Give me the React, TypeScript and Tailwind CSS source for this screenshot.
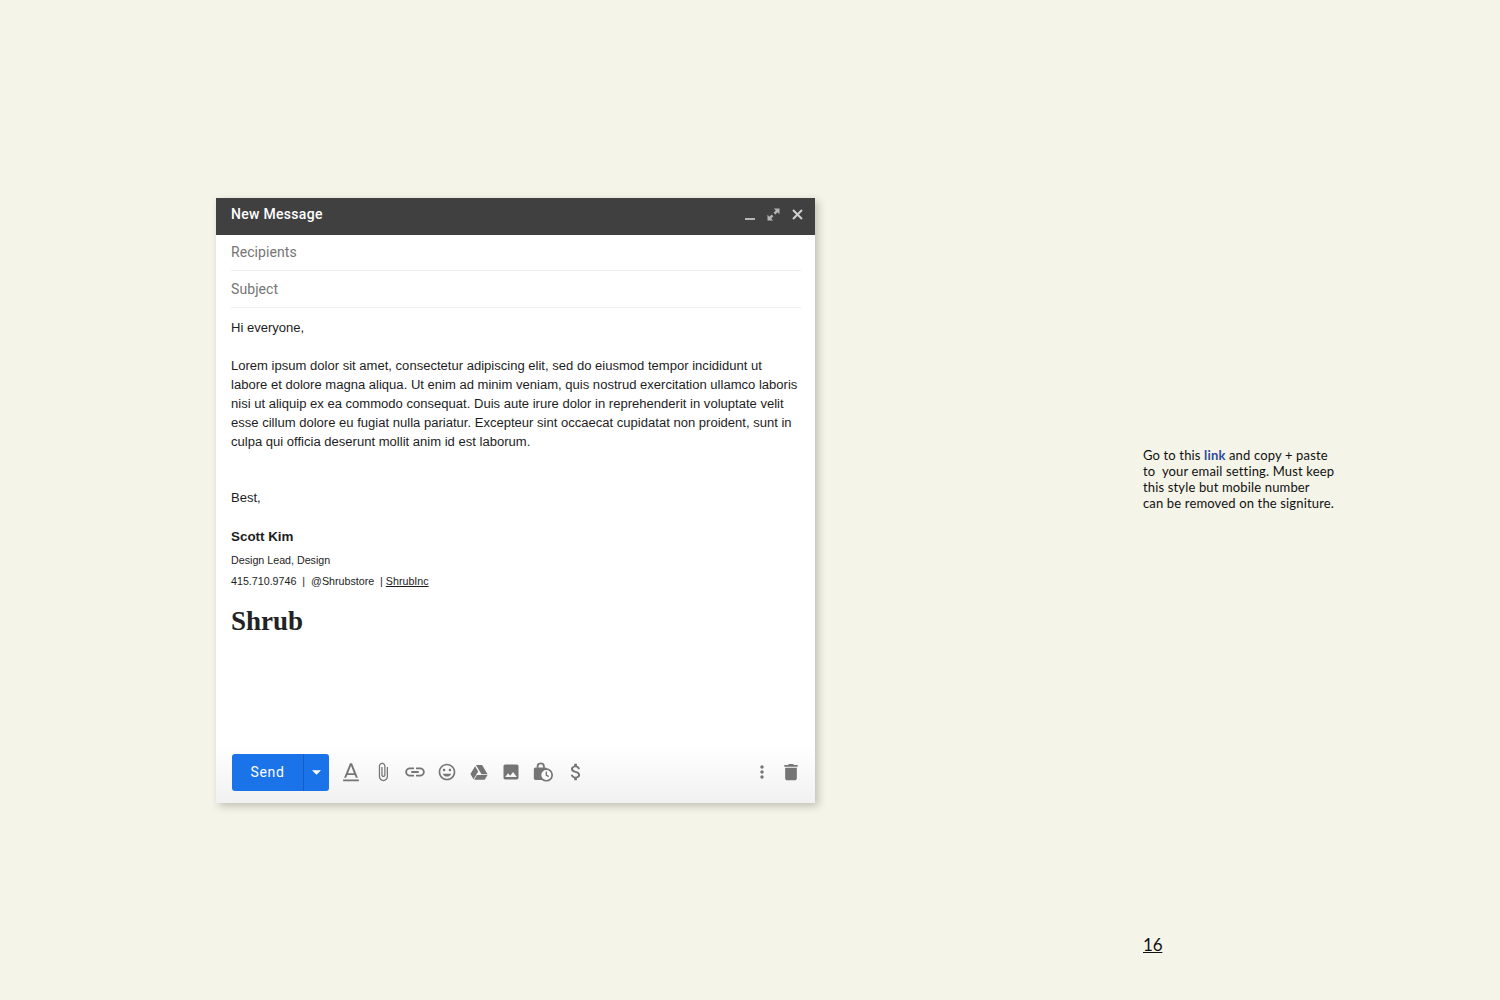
import React from "react";

const iconPaths: Record<string, string> = {
  text: "M2.500 21v2h19v-2h-19zM7.600 15.500h8.800l1.500 3.500h2.400L13.200 1.500h-2.400L3.700 19h2.400l1.500-3.500zM12 4.600l3.500 9H8.500l3.500-9z",
  attach: "M16.500 6v11.500c0 2.210-1.790 4-4 4s-4-1.790-4-4V5c0-1.380 1.120-2.500 2.500-2.500s2.500 1.120 2.500 2.500v10.500c0 .550-.450 1-1 1s-1-.450-1-1V6H10v9.500c0 1.380 1.120 2.500 2.500 2.500s2.500-1.120 2.500-2.500V5c0-2.210-1.790-4-4-4S7 2.790 7 5v12.500c0 3.040 2.460 5.500 5.500 5.500s5.500-2.460 5.500-5.500V6h-1.500z",
  link: "M2.400 12c0-1.900 1.500-3.300 3.400-3.300h5V6.500H6.300C3 6.500.300 9 .300 12s2.700 5.500 6 5.500h4.500v-2.200h-5c-1.900 0-3.400-1.400-3.400-3.300zM7.500 13.200h9v-2.400h-9v2.400zM17.700 6.500h-4.500v2.200h5c1.900 0 3.400 1.400 3.400 3.300s-1.500 3.300-3.400 3.300h-5v2.200h4.500c3.300 0 6-2.500 6-5.500s-2.700-5.500-6-5.500z",
  emoji: "M11.990 2C6.470 2 2 6.480 2 12s4.470 10 9.990 10C17.520 22 22 17.520 22 12S17.520 2 11.990 2zM12 20c-4.420 0-8-3.580-8-8s3.580-8 8-8 8 3.580 8 8-3.580 8-8 8zm3.500-9c.830 0 1.500-.670 1.500-1.500S16.330 8 15.500 8 14 8.670 14 9.500s.670 1.500 1.500 1.500zm-7 0c.830 0 1.500-.670 1.500-1.500S9.330 8 8.500 8 7 8.670 7 9.500 7.670 11 8.500 11zm3.500 6.500c2.330 0 4.310-1.460 5.110-3.500H6.890c.800 2.040 2.780 3.500 5.110 3.500z",
  drive: "M8.300 3.500h7.400l6.600 11.200h-7.300L8.300 3.500zM7.300 5.200l3.700 6.300-5.600 9.300-3.700-6.300 5.600-9.300zM9.500 15.500h12.800l-3.600 5.700H6.200l3.300-5.700z",
  image: "M21 19V5c0-1.100-.900-2-2-2H5c-1.100 0-2 .900-2 2v14c0 1.100.900 2 2 2h14c1.100 0 2-.900 2-2zM8.500 13.500l2.500 3.010L14.500 12l4.500 6H5l3.500-4.500z",
  dollar: "M11.800 10.900c-2.270-.590-3-1.200-3-2.150 0-1.090 1.010-1.850 2.700-1.850 1.780 0 2.440.850 2.500 2.100h2.210c-.070-1.720-1.120-3.300-3.210-3.810V3h-3v2.160c-1.940.420-3.500 1.680-3.500 3.610 0 2.310 1.910 3.460 4.700 4.130 2.500.600 3 1.480 3 2.410 0 .690-.490 1.790-2.700 1.790-2.060 0-2.870-.920-2.980-2.100h-2.200c.120 2.190 1.760 3.420 3.680 3.830V21h3v-2.150c1.950-.370 3.500-1.500 3.500-3.550 0-2.840-2.430-3.810-4.700-4.400z",
  more: "M12 8c1.100 0 2-.900 2-2s-.900-2-2-2-2 .900-2 2 .900 2 2 2zm0 2c-1.100 0-2 .900-2 2s.900 2 2 2 2-.900 2-2-.900-2-2-2zm0 6c-1.100 0-2 .900-2 2s.900 2 2 2 2-.900 2-2-.900-2-2-2z",
  trash: "M5 19.500C5 20.900 6.100 22 7.500 22h9c1.400 0 2.500-1.100 2.500-2.500V7H5v12.500zM20 3.500h-4.500l-1-1h-5l-1 1H4v2.200h16V3.500z",
};

function ToolIcon({ name, className = "w-[20px] h-[20px]" }: { name: string; className?: string }) {
  return (
    <svg viewBox="0 0 24 24" className={`${className} text-[#757575] shrink-0`} fill="currentColor">
      <path d={iconPaths[name]} />
    </svg>
  );
}

// lock with a little clock on it, no stock icon for this one
function ConfidentialIcon() {
  return (
    <svg viewBox="0 0 24 24" className="w-[20px] h-[20px] shrink-0" fill="none">
      <path d="M5.500 7V5.500a3.800 3.800 0 0 1 7.600 0V7" stroke="#757575" strokeWidth="2.200" />
      <rect x="1" y="6.500" width="16" height="15" rx="2" fill="#757575" />
      <circle cx="16" cy="15.500" r="7" fill="#ffffff" stroke="#757575" strokeWidth="2" />
      <path d="M16 11.500v4.300l3 1.700" stroke="#757575" strokeWidth="1.700" />
    </svg>
  );
}

export default function App() {
  return (
    <div className="w-[1500px] h-[1000px] bg-[#f4f4e8] flex pl-[216px] pt-[198px] overflow-hidden">
      {/* Compose window */}
      <div className="w-[599px] h-[605px] bg-white flex flex-col shrink-0 shadow-[3px_3px_8px_rgba(0,0,0,0.22)]">
        <div className="h-[37px] bg-[#404040] flex items-center pl-[15px] pr-[11px] shrink-0">
          <span className="font-['Roboto',sans-serif] font-medium text-[14px] tracking-[0.3px] text-white flex-1 -mt-[4px]">
            New Message
          </span>
          <div className="flex items-center gap-[11px] -mt-[4px]">
            <svg viewBox="0 0 13 13" className="w-[13px] h-[13px] translate-x-[1px]"><rect x="1" y="10" width="10" height="2" fill="#b5b5b5" /></svg>
            <svg viewBox="0 0 13 13" className="w-[13px] h-[13px]" fill="#b5b5b5">
              <path d="M6.800 0.500H12.500V6.200l-2-2-2.200 2.200-1.700-1.700 2.200-2.200-2-2zM0.500 12.500V6.800l2 2 2.200-2.200 1.700 1.700-2.200 2.200 2 2H0.500z" />
            </svg>
            <svg viewBox="0 0 13 13" className="w-[13px] h-[13px]" stroke="#d0d0d0" strokeWidth="2">
              <path d="M2 2l9 9M11 2l-9 9" />
            </svg>
          </div>
        </div>

        <div className="ml-[15px] mr-[14px] font-['Roboto',sans-serif] text-[14px] tracking-[0.08px] text-[#757575]">
          <div className="h-[36px] flex items-center border-b border-[#eeeeee]">Recipients</div>
          <div className="h-[37px] flex items-center border-b border-[#eeeeee]">Subject</div>
        </div>

        <div className="flex-1 px-[15px] font-['Liberation_Sans',sans-serif] text-[13.05px] leading-[19px] text-[#1d1d1d]">
          <p className="mt-[10px]">Hi everyone,</p>
          <p className="mt-[19px] whitespace-nowrap">
            Lorem ipsum dolor sit amet, consectetur adipiscing elit, sed do eiusmod tempor incididunt ut<br />
            labore et dolore magna aliqua. Ut enim ad minim veniam, quis nostrud exercitation ullamco laboris<br />
            nisi ut aliquip ex ea commodo consequat. Duis aute irure dolor in reprehenderit in voluptate velit<br />
            esse cillum dolore eu fugiat nulla pariatur. Excepteur sint occaecat cupidatat non proident, sunt in<br />
            culpa qui officia deserunt mollit anim id est laborum.
          </p>
          <p className="mt-[37px]">Best,</p>
          <p className="mt-[20px] font-bold text-[13.4px]">Scott Kim</p>
          <p className="mt-[5px] text-[10.7px]">Design Lead, Design</p>
          <p className="mt-[2px] text-[10.7px] whitespace-pre">
            415.710.9746  |  @Shrubstore  | <span className="underline">ShrubInc</span>
          </p>
          <p className="mt-[13px] font-['Liberation_Serif',serif] font-bold text-[27px] leading-[34px] text-[#222222]">Shrub</p>
        </div>

        {/* Bottom toolbar */}
        <div className="h-[58px] shrink-0 bg-gradient-to-b from-white to-[#f1f1f1] flex items-start pt-[9px] pl-[16px] pr-[14px]">
          <div className="w-[97px] h-[37px] bg-[#1a73e8] rounded-[3px] flex text-white font-['Roboto',sans-serif] text-[14px] tracking-[0.7px]">
            <div className="w-[72px] flex items-center justify-center border-r border-[#155fc4] pb-[1px]">Send</div>
            <div className="flex-1 flex items-center justify-center">
              <svg viewBox="0 0 10 5" className="w-[9px] h-[5px]"><path d="M0 0h10L5 5z" fill="#ffffff" /></svg>
            </div>
          </div>
          <div className="flex items-center gap-[12px] ml-[12px] h-[35px]">
            <ToolIcon name="text" />
            <ToolIcon name="attach" />
            <ToolIcon name="link" />
            <ToolIcon name="emoji" />
            <ToolIcon name="drive" />
            <ToolIcon name="image" />
            <ConfidentialIcon />
            <ToolIcon name="dollar" className="w-[22px] h-[22px] ml-[-1px] translate-x-[1px]" />
          </div>
          <div className="flex items-center gap-[9px] ml-auto h-[35px]">
            <ToolIcon name="more" />
            <ToolIcon name="trash" />
          </div>
        </div>
      </div>

      {/* Side note + page number */}
      <div className="ml-[328px] flex flex-col">
        <p className="mt-[249px] font-['Lato',sans-serif] text-[13px] tracking-[0.15px] leading-[16px] text-[#111111] whitespace-pre">
          Go to this <a className="font-bold text-[#2f4b9b]">link</a> and copy + paste{"\n"}
          to  your email setting. Must keep{"\n"}
          this style but mobile number{"\n"}
          can be removed on the signiture.
        </p>
        <a className="mt-[422px] font-['Lato',sans-serif] text-[17px] tracking-[-0.2px] leading-[24px] text-[#111111] underline">16</a>
      </div>
    </div>
  );
}
